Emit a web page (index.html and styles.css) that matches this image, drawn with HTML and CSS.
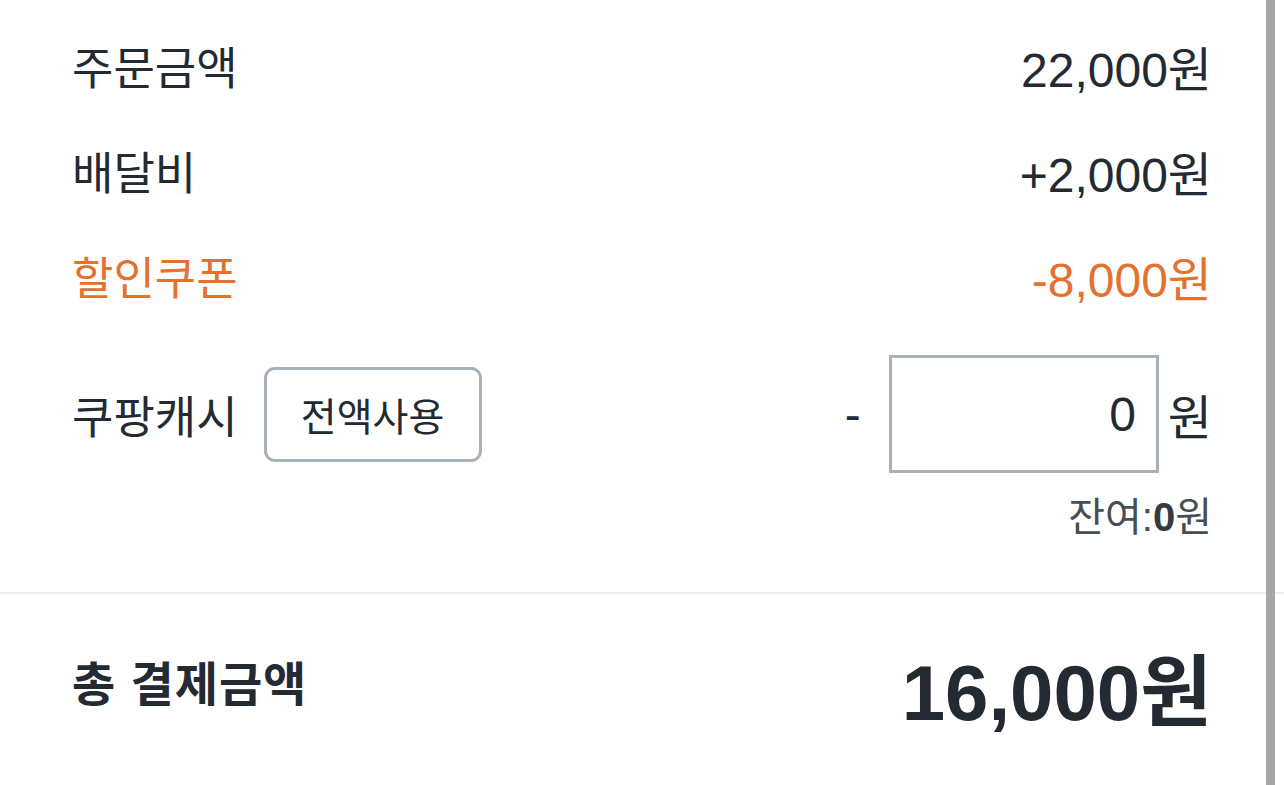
FILE: index.html
```html
<!DOCTYPE html>
<html lang="ko">
<head>
    <meta charset="UTF-8">
    <meta name="viewport" content="width=device-width, initial-scale=1.0">
    <title>결제금액</title>
    <link rel="stylesheet" href="styles.css">
</head>
<body>

    <!-- 금액 내역 -->
    <div class="summary">
        <div class="row">
            <span class="label">주문금액</span>
            <span class="amount">22,000원</span>
        </div>
        <div class="row">
            <span class="label">배달비</span>
            <span class="amount">+2,000원</span>
        </div>
        <div class="row discount">
            <span class="label">할인쿠폰</span>
            <span class="amount">-8,000원</span>
        </div>

        <div class="cash-row">
            <div class="cash-left">
                <span class="label">쿠팡캐시</span>
                <button class="use-all">전액사용</button>
            </div>
            <div class="cash-right">
                <span class="minus">-</span>
                <input class="cash-input" type="text" value="0">
                <span class="unit">원</span>
            </div>
        </div>
        <div class="balance">잔여:<b>0</b>원</div>
    </div>

    <!-- 총 결제금액 -->
    <div class="total">
        <span class="total-label">총 결제금액</span>
        <span class="total-amount">16,000원</span>
    </div>

    <div class="scrollbar"></div>

</body>
</html>
```

FILE: styles.css
```css
body {
    margin: 0;
    background-color: #fff;
    color: #232a32;
    font-family: "Liberation Sans", "Noto Sans CJK KR", sans-serif;
    font-size: 45px;
}

.summary {
    padding: 13px 72px 0 72px;
    border-bottom: 2px solid #eeeeee;
    height: 594px;
    box-sizing: border-box;
}

.row {
    display: flex;
    justify-content: space-between;
    align-items: center;
    height: 105px;
}

.amount {
    font-size: 48px;
}

.discount {
    color: #e5712f;
}

.cash-row {
    display: flex;
    justify-content: space-between;
    align-items: center;
    margin-top: 27px;
}

.cash-left {
    display: flex;
    align-items: center;
    gap: 26px;
}

.use-all {
    width: 218px;
    height: 95px;
    border: 3px solid #a9b0b8;
    border-radius: 11px;
    background: #fff;
    color: #232a32;
    font-family: "Noto Sans CJK KR", sans-serif;
    font-size: 39px;
    padding: 0;
}

.cash-right {
    display: flex;
    align-items: center;
    font-size: 48px;
}

.minus {
    margin-right: 28px;
}

.cash-input {
    width: 270px;
    height: 118px;
    box-sizing: border-box;
    border: 3px solid #a9b0b8;
    padding: 0 20px 0 0;
    text-align: right;
    font-family: "Liberation Sans", sans-serif;
    font-size: 48px;
    color: #232a32;
    outline: none;
}

.unit {
    margin-left: 9px;
}

.balance {
    text-align: right;
    font-size: 40px;
    color: #474d54;
    margin-top: 12px;
}

.balance b {
    color: #343a41;
}

.total {
    display: flex;
    justify-content: space-between;
    align-items: center;
    padding: 36px 72px 0 72px;
}

.total-label {
    font-family: "Noto Sans CJK KR", sans-serif;
    font-weight: bold;
    font-size: 47px;
    letter-spacing: 1px;
    margin-top: -12px;
}

.total-amount {
    font-weight: bold;
    font-size: 78px;
}

/* 스크롤바 */
.scrollbar {
    position: fixed;
    top: 0;
    right: 9px;
    width: 9px;
    height: 100%;
    background-color: #a6a6a6;
}
```
